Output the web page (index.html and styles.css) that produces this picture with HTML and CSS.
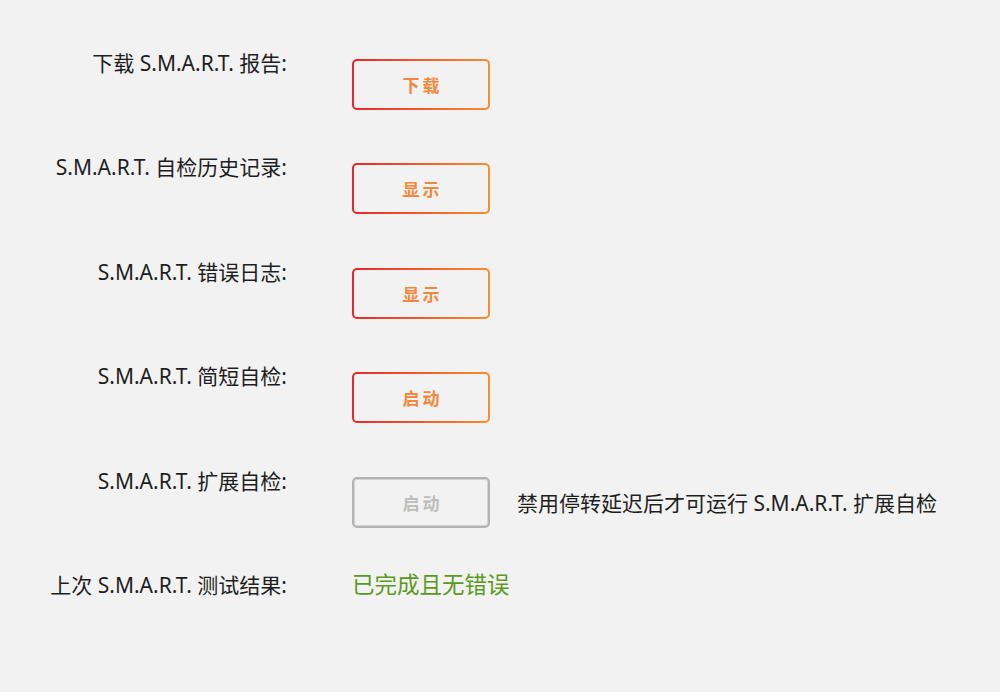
FILE: index.html
```html
<!DOCTYPE html>
<html>
  <head>
    <meta charset="utf-8">
    <title>S.M.A.R.T.</title>
    <link rel="stylesheet" href="styles.css">
  </head>
  <body>
    <div class="smart-form">
      <div class="label">下载 S.M.A.R.T. 报告:</div>
      <div class="value"><button type="button" class="btn">下载</button></div>

      <div class="label">S.M.A.R.T. 自检历史记录:</div>
      <div class="value"><button type="button" class="btn">显示</button></div>

      <div class="label">S.M.A.R.T. 错误日志:</div>
      <div class="value"><button type="button" class="btn">显示</button></div>

      <div class="label">S.M.A.R.T. 简短自检:</div>
      <div class="value"><button type="button" class="btn">启动</button></div>

      <div class="label">S.M.A.R.T. 扩展自检:</div>
      <div class="value">
        <button type="button" class="btn" disabled>启动</button>
        <span class="note">禁用停转延迟后才可运行 S.M.A.R.T. 扩展自检</span>
      </div>

      <div class="label">上次 S.M.A.R.T. 测试结果:</div>
      <div class="value last"><span class="status ok">已完成且无错误</span></div>
    </div>
  </body>
</html>
```

FILE: styles.css
```css
body {
  margin: 0;
  background-color: #f2f2f2;
  font-family: "Noto Sans", "Noto Sans CJK SC", sans-serif;
  color: #1e1e1e;
}

.smart-form {
  display: grid;
  grid-template-columns: 287px 1fr;
  grid-auto-rows: 104.4px;
  column-gap: 65px;
  padding-top: 49px;
}

.label {
  text-align: right;
  font-size: 21px;
  line-height: 28px;
}

.value {
  display: flex;
  align-items: center;
  align-self: start;
  margin-top: 10px;
}

.btn {
  width: 138px;
  height: 51px;
  border: 2px solid transparent;
  border-radius: 5px;
  background: linear-gradient(#f2f2f2, #f2f2f2) padding-box,
              linear-gradient(90deg, #e8262b, #ff8d2c) border-box;
  color: #f5873a;
  font-family: "Noto Sans CJK SC", sans-serif;
  font-size: 17px;
  font-weight: bold;
  letter-spacing: 3px;
  padding: 0 0 0 3px;
  cursor: pointer;
}

/* greyed out while spin-down delay is on */
.btn:disabled {
  background: #f2f2f2;
  border-color: #b3b3b3;
  box-shadow: inset 0 0 0 1px #d4d4d4;
  color: #bdbdbd;
  cursor: default;
}

.note {
  margin-left: 27px;
  font-size: 21px;
}

.value.last {
  margin-top: 0;
}

.status {
  font-size: 22.5px;
  line-height: 28px;
}

.ok {
  color: #5b9a1d;
}
```
